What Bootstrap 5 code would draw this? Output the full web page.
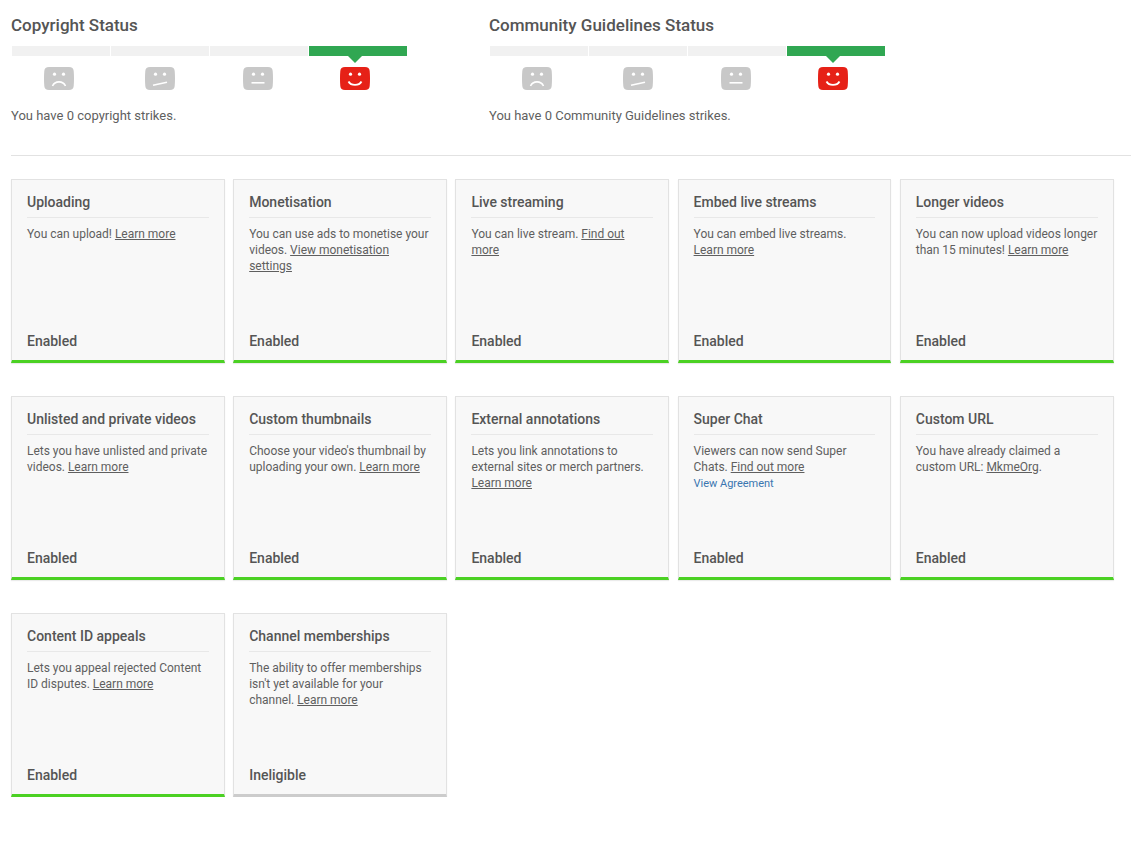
<!DOCTYPE html>
<html lang="en">
<head>
<meta charset="utf-8">
<title>Channel status</title>
<link rel="stylesheet" href="https://cdn.jsdelivr.net/npm/bootstrap@5.3.0/dist/css/bootstrap.min.css">
<style>
body{font-family:Roboto,"Liberation Sans",sans-serif;color:#5f5f5f;background:#fff;font-size:13px;line-height:16px}
.page-wrap{padding:16px 11px 0}
.status-row{display:flex;height:139px}
.status-col{width:478px;flex:none}
.status-title{font-size:17px;font-weight:500;line-height:18px;margin:0;color:#555}
.meter{display:flex;gap:1px;width:395px;margin:12px 0 0 1px}
.meter-seg{flex:1;position:relative}
.meter-bar{height:10px;background:#f1f1f1}
.meter-seg.is-on .meter-bar{background:#30a752}
.meter-seg.is-on .meter-bar::after{content:"";position:absolute;left:46px;top:10px;margin-left:-7px;border:7px solid transparent;border-bottom:0;border-top-color:#30a752}
.face{display:block;width:30px;height:23px;margin:11px 0 0 32px}
.meter-seg:nth-child(2) .face{margin-left:34px}
.meter-seg:nth-child(3) .face{margin-left:33px}
.meter-seg:nth-child(4) .face{margin-left:31px}
.status-note{margin:18px 0 0;line-height:16px}
.divider{margin:0 0 23px;border:0;border-top:1px solid #e2e2e2;opacity:1;width:1120px}
.feature-grid{display:grid;grid-template-columns:repeat(5,1fr);column-gap:8.3px;row-gap:33px;width:1102.7px}
.feature{height:184px;background:#f8f8f8;border:1px solid #e2e2e2;border-bottom:3px solid #4bd123;padding:0 15px;display:flex;flex-direction:column;font-size:12px;line-height:16px;box-shadow:0 1px 1px rgba(0,0,0,.08)}
.feature.is-off{border-bottom-color:#ccc}
.feature-title{font-size:14px;font-weight:500;line-height:20px;margin:0;padding:12px 0 5px;border-bottom:1px solid #e8e8e8;color:#555}
.feature-text{margin:8px 0 0;flex:1;letter-spacing:-.015px}
.feature-text a{color:#5f5f5f;text-decoration:underline}
.feature-text a.agree{display:block;color:#3a76b0;text-decoration:none;font-size:11px;margin-top:1px}
.feature-state{font-size:14px;font-weight:500;line-height:20px;padding-bottom:9px;color:#555}
</style>
</head>
<body>
<svg width="0" height="0" class="d-block" aria-hidden="true">
<defs>
<g id="f-base"><path d="M5 0h20c3 0 4.500 1.500 4.700 4 .4 5 .4 10 0 15-.2 2.500-1.700 4-4.700 4H5c-3 0-4.500-1.500-4.700-4-.4-5-.4-10 0-15C.5 1.500 2 0 5 0z"/><circle cx="10.500" cy="7.200" r="1.600" fill="#fff"/><circle cx="19.500" cy="7.200" r="1.600" fill="#fff"/></g>
</defs>
</svg>
<div class="page-wrap">
<div class="status-row">
<section class="status-col">
<h2 class="status-title">Copyright Status</h2>
<div class="meter">
<div class="meter-seg"><div class="meter-bar"></div><svg class="face" viewBox="0 0 30 23" fill="#c8c8c8"><use href="#f-base"/><path d="M8.500 19c2.500-5.500 10.500-5.500 13 0" fill="none" stroke="#fff" stroke-width="1.600"/></svg></div>
<div class="meter-seg"><div class="meter-bar"></div><svg class="face" viewBox="0 0 30 23" fill="#c8c8c8"><use href="#f-base"/><path d="M8 18.200l14-3" fill="none" stroke="#fff" stroke-width="1.600"/></svg></div>
<div class="meter-seg"><div class="meter-bar"></div><svg class="face" viewBox="0 0 30 23" fill="#c8c8c8"><use href="#f-base"/><path d="M8.500 15.800h13" fill="none" stroke="#fff" stroke-width="1.600"/></svg></div>
<div class="meter-seg is-on"><div class="meter-bar"></div><svg class="face" viewBox="0 0 30 23" fill="#e62117"><use href="#f-base"/><path d="M8.500 14.500c2.500 4.500 10.500 4.500 13 0" fill="none" stroke="#fff" stroke-width="1.800"/></svg></div>
</div>
<p class="status-note">You have 0 copyright strikes.</p>
</section>
<section class="status-col">
<h2 class="status-title">Community Guidelines Status</h2>
<div class="meter">
<div class="meter-seg"><div class="meter-bar"></div><svg class="face" viewBox="0 0 30 23" fill="#c8c8c8"><use href="#f-base"/><path d="M8.500 19c2.500-5.500 10.500-5.500 13 0" fill="none" stroke="#fff" stroke-width="1.600"/></svg></div>
<div class="meter-seg"><div class="meter-bar"></div><svg class="face" viewBox="0 0 30 23" fill="#c8c8c8"><use href="#f-base"/><path d="M8 18.200l14-3" fill="none" stroke="#fff" stroke-width="1.600"/></svg></div>
<div class="meter-seg"><div class="meter-bar"></div><svg class="face" viewBox="0 0 30 23" fill="#c8c8c8"><use href="#f-base"/><path d="M8.500 15.800h13" fill="none" stroke="#fff" stroke-width="1.600"/></svg></div>
<div class="meter-seg is-on"><div class="meter-bar"></div><svg class="face" viewBox="0 0 30 23" fill="#e62117"><use href="#f-base"/><path d="M8.500 14.500c2.500 4.500 10.500 4.500 13 0" fill="none" stroke="#fff" stroke-width="1.800"/></svg></div>
</div>
<p class="status-note">You have 0 Community Guidelines strikes.</p>
</section>
</div>
<hr class="divider">
<div class="feature-grid">
<article class="feature"><h3 class="feature-title">Uploading</h3><p class="feature-text">You can upload! <a href="#">Learn more</a></p><div class="feature-state">Enabled</div></article>
<article class="feature"><h3 class="feature-title">Monetisation</h3><p class="feature-text">You can use ads to monetise your videos. <a href="#">View monetisation settings</a></p><div class="feature-state">Enabled</div></article>
<article class="feature"><h3 class="feature-title">Live streaming</h3><p class="feature-text">You can live stream. <a href="#">Find out more</a></p><div class="feature-state">Enabled</div></article>
<article class="feature"><h3 class="feature-title">Embed live streams</h3><p class="feature-text">You can embed live streams. <a href="#">Learn more</a></p><div class="feature-state">Enabled</div></article>
<article class="feature"><h3 class="feature-title">Longer videos</h3><p class="feature-text">You can now upload videos longer than 15 minutes! <a href="#">Learn more</a></p><div class="feature-state">Enabled</div></article>
<article class="feature"><h3 class="feature-title">Unlisted and private videos</h3><p class="feature-text">Lets you have unlisted and private videos. <a href="#">Learn more</a></p><div class="feature-state">Enabled</div></article>
<article class="feature"><h3 class="feature-title">Custom thumbnails</h3><p class="feature-text">Choose your video's thumbnail by uploading your own. <a href="#">Learn more</a></p><div class="feature-state">Enabled</div></article>
<article class="feature"><h3 class="feature-title">External annotations</h3><p class="feature-text">Lets you link annotations to external sites or merch partners. <a href="#">Learn more</a></p><div class="feature-state">Enabled</div></article>
<article class="feature"><h3 class="feature-title">Super Chat</h3><p class="feature-text">Viewers can now send Super Chats. <a href="#">Find out more</a><a href="#" class="agree">View Agreement</a></p><div class="feature-state">Enabled</div></article>
<article class="feature"><h3 class="feature-title">Custom URL</h3><p class="feature-text">You have already claimed a custom URL: <a href="#">MkmeOrg</a>.</p><div class="feature-state">Enabled</div></article>
<article class="feature"><h3 class="feature-title">Content ID appeals</h3><p class="feature-text">Lets you appeal rejected Content ID disputes. <a href="#">Learn more</a></p><div class="feature-state">Enabled</div></article>
<article class="feature is-off"><h3 class="feature-title">Channel memberships</h3><p class="feature-text">The ability to offer memberships isn't yet available for your<br>channel. <a href="#">Learn more</a></p><div class="feature-state">Ineligible</div></article>
</div>
</div>
<script src="https://cdn.jsdelivr.net/npm/bootstrap@5.3.0/dist/js/bootstrap.bundle.min.js"></script>
</body>
</html>
